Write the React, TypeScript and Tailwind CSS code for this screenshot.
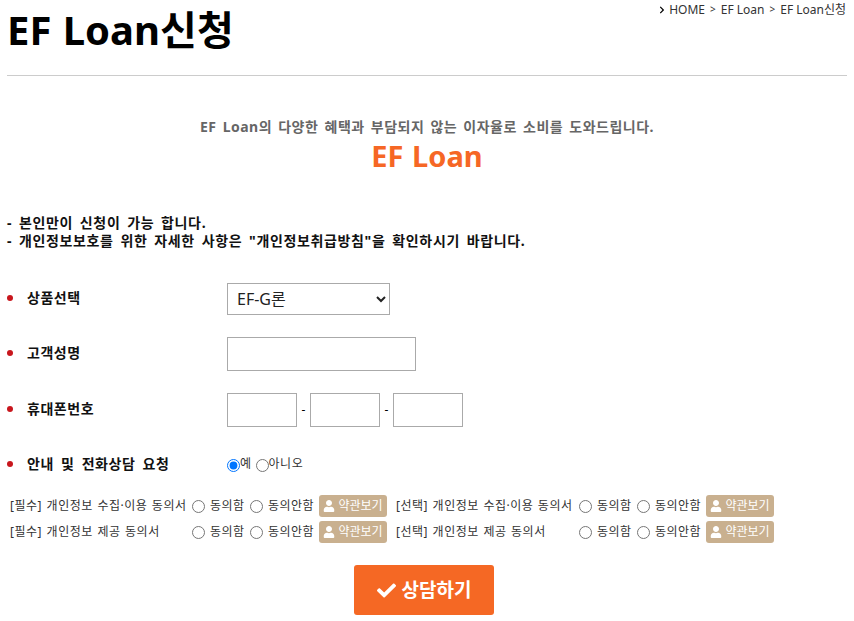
import React from "react";
import { FaCheck, FaUser, FaChevronRight } from "react-icons/fa";

function Terms({ label, name, labelWidth }: { label: string; name: string; labelWidth: string }) {
  return (
    <div className="flex items-center">
      <span className={`${labelWidth} pb-[1px] text-[12px] leading-[21px] tracking-[0.5px] [word-spacing:1px] text-[#333] whitespace-nowrap`}>{label}</span>
      <input type="radio" name={name} className="m-0 h-[13px] w-[13px] mr-[5px]" />
      <span className="w-[40px] pb-[1px] text-[12px] leading-[21px] tracking-[0.5px] text-[#333] whitespace-nowrap">동의함</span>
      <input type="radio" name={name} className="m-0 h-[13px] w-[13px] mr-[5px]" />
      <span className="w-[51px] pb-[1px] text-[12px] leading-[21px] tracking-[0.5px] text-[#333] whitespace-nowrap">동의안함</span>
      <span className="flex h-[22px] w-[68px] items-center justify-center gap-[3px] rounded-[3px] bg-[#c9b08f] text-[12px] text-white whitespace-nowrap">
        <FaUser className="h-[12px] w-[12px]" />약관보기
      </span>
    </div>
  );
}

function Row({ label, className, children }: { label: string; className: string; children: React.ReactNode }) {
  return (
    <div className={`flex items-center ${className}`}>
      <span className="h-[6px] w-[6px] rounded-full bg-[#c8161d] mr-[14px] mb-[3px]" />
      <span className="w-[200px] pb-[3px] text-[14px] font-bold tracking-[0.55px] [word-spacing:3px] text-[#111] whitespace-nowrap">{label}</span>
      {children}
    </div>
  );
}

export default function App() {
  return (
    <div className="h-[621px] w-[854px] overflow-hidden bg-white font-['Noto_Sans','Noto_Sans_CJK_KR',sans-serif]">
      <div className="px-[7px]">
        <header className="flex h-[76px] justify-between border-b border-[#cccccc]">
          <h1 className="text-[40px] font-bold leading-[60px] text-black whitespace-nowrap [word-spacing:1px]">EF Loan신청</h1>
          <div className="flex h-[19px] items-center pr-[1px] text-[12px] text-[#333] whitespace-nowrap">
            <FaChevronRight className="mr-[3px] h-[8px] w-[8px] text-black" />
            HOME <span className="mx-[5px] text-[10px]">&gt;</span> EF Loan <span className="mx-[5px] text-[10px]">&gt;</span> EF Loan신청
          </div>
        </header>

        <section className="pt-[41px] text-center">
          <p className="text-[14px] font-bold leading-[20px] tracking-[0.5px] [word-spacing:2px] text-[#666]">EF Loan의 다양한 혜택과 부담되지 않는 이자율로 소비를 도와드립니다.</p>
          <p className="text-[29px] font-bold leading-[38px] [word-spacing:1px] text-[#f66725]">EF Loan</p>
        </section>

        <section className="mt-[39px] text-[14px] font-bold leading-[18px] tracking-[0.65px] [word-spacing:2.5px] text-[#111]">
          <p>- 본인만이 신청이 가능 합니다.</p>
          <p>- 개인정보보호를 위한 자세한 사항은 "개인정보취급방침"을 확인하시기 바랍니다.</p>
        </section>

        <Row label="상품선택" className="mt-[32px] h-[34px]">
          <select className="h-[32px] w-[163px] border border-[#aaaaaa] bg-white pl-[5px] text-[16px] text-[#222]">
            <option>EF-G론</option>
          </select>
        </Row>
        <Row label="고객성명" className="mt-[21px] h-[34px]">
          <input className="h-[34px] w-[189px] border border-[#aaaaaa]" />
        </Row>
        <Row label="휴대폰번호" className="mt-[22px] h-[34px]">
          <input className="h-[34px] w-[70px] border border-[#aaaaaa]" />
          <span className="w-[13px] text-center text-[12px]">-</span>
          <input className="h-[34px] w-[70px] border border-[#aaaaaa]" />
          <span className="w-[13px] text-center text-[12px]">-</span>
          <input className="h-[34px] w-[70px] border border-[#aaaaaa]" />
        </Row>
        <Row label="안내 및 전화상담 요청" className="mt-[21px] h-[34px]">
          <div className="flex items-center text-[12px] tracking-[0.5px] text-[#333]">
            <input type="radio" name="call" defaultChecked className="m-0 h-[13px] w-[13px]" />
            <span className="mr-[4px] pb-[3px]">예</span>
            <input type="radio" name="call" className="m-0 h-[13px] w-[13px]" />
            <span className="pb-[3px]">아니오</span>
          </div>
        </Row>

        <div className="mt-[13px] flex flex-col gap-[4px] pl-[3px]">
          <div className="flex gap-[9px]">
            <Terms label="[필수] 개인정보 수집·이용 동의서" name="a" labelWidth="w-[182px]" />
            <Terms label="[선택] 개인정보 수집·이용 동의서" name="b" labelWidth="w-[183px]" />
          </div>
          <div className="flex gap-[9px]">
            <Terms label="[필수] 개인정보 제공 동의서" name="c" labelWidth="w-[182px]" />
            <Terms label="[선택] 개인정보 제공 동의서" name="d" labelWidth="w-[183px]" />
          </div>
        </div>

        <div className="mt-[22px] flex justify-center pr-[6px]">
          <button className="flex h-[50px] w-[140px] items-center justify-center gap-[6px] rounded-[3px] bg-[#f56824] text-[19px] font-bold text-white">
            <FaCheck className="h-[19px] w-[19px]" />상담하기
          </button>
        </div>
      </div>
    </div>
  );
}
